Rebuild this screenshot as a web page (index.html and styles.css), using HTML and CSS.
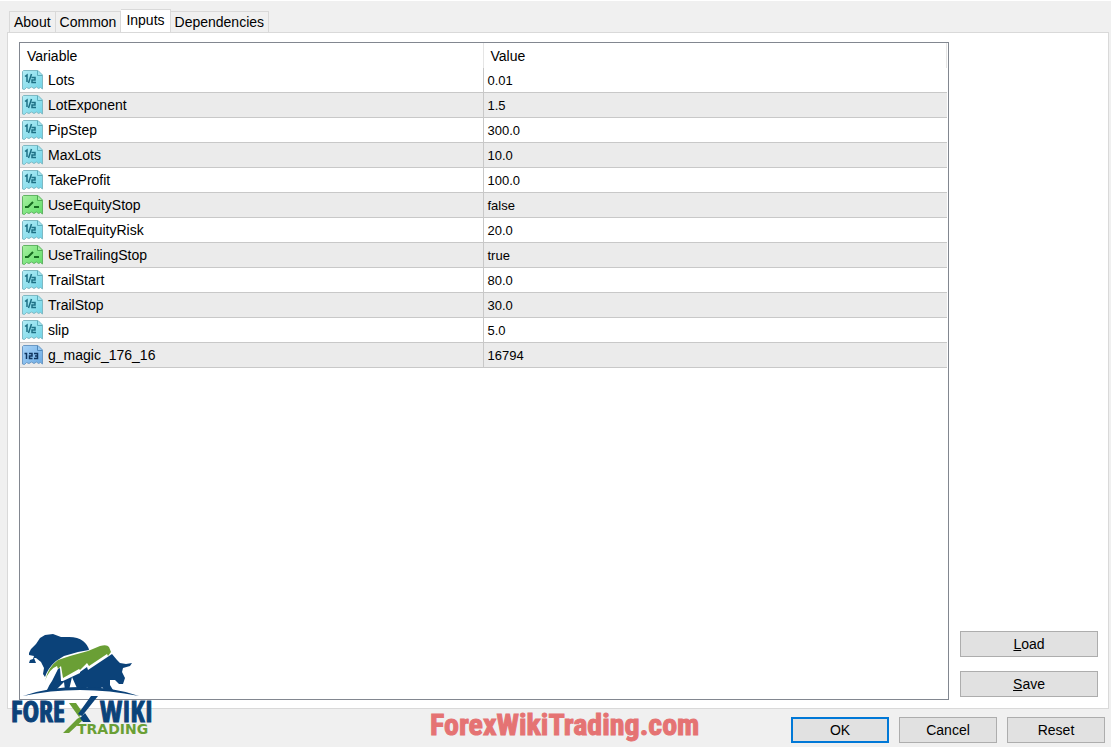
FILE: index.html
```html
<!DOCTYPE html>
<html lang="en">
<head>
<meta charset="utf-8">
<title>Inputs</title>
<link rel="stylesheet" href="styles.css">
</head>
<body>
<svg class="defs" aria-hidden="true">
  <defs>
    <linearGradient id="cyan" x1="0" y1="0" x2="1" y2="1"><stop offset="0" stop-color="#b4eef6"/><stop offset="1" stop-color="#6fd3e6"/></linearGradient>
    <linearGradient id="green" x1="0" y1="0" x2="1" y2="1"><stop offset="0" stop-color="#a8f0a0"/><stop offset="1" stop-color="#5fdc68"/></linearGradient>
    <linearGradient id="blue" x1="0" y1="0" x2="1" y2="1"><stop offset="0" stop-color="#a8d4f8"/><stop offset="1" stop-color="#6aa9e2"/></linearGradient>
    <path id="sheet" d="M1.500 .5H16L20.500 5V19L18.500 17.500L16.500 18.500L14.500 17L12 18.500L9.500 17L7 18.500L4.500 17.500L2.500 19.500L.5 19V1.500Z"/>
    <symbol id="double" viewBox="0 0 21 20">
      <use href="#sheet" fill="url(#cyan)" stroke="#7fb9c4" stroke-width="1"/>
      <path d="M15.500 1V5.500H20" fill="#a5e3ee" stroke="#5aaebd"/>
      <path d="M3 6.500L5 5V12M9.500 4L6.500 13M9.500 7.500H13V10H10V12.500H14" fill="none" stroke="#1d7085" stroke-width="1.500"/>
    </symbol>
    <symbol id="bool" viewBox="0 0 21 20">
      <use href="#sheet" fill="url(#green)" stroke="#62b465" stroke-width="1"/>
      <path d="M15.500 1V5.500H20" fill="#a8efa0" stroke="#4cab52"/>
      <path d="M3 12H6L11 7M12 12H17" fill="none" stroke="#176b20" stroke-width="2"/>
    </symbol>
    <symbol id="integer" viewBox="0 0 21 20">
      <use href="#sheet" fill="url(#blue)" stroke="#6c99c4" stroke-width="1"/>
      <path d="M15.500 1V5.500H20" fill="#9ccbf2" stroke="#4f88bb"/>
      <path d="M2.500 8.500H4.500V14M7 8.500H10V11H7.500V13.500H10.500M12 8.500H15.500V13.500H12M13 11H15" fill="none" stroke="#0f355f" stroke-width="1.500"/>
    </symbol>
  </defs>
</svg>
<main class="dialog">
  <nav class="tabs" role="tablist">
    <button class="tab" role="tab">About</button>
    <button class="tab" role="tab">Common</button>
    <button class="tab tab-active" role="tab" aria-selected="true">Inputs</button>
    <button class="tab" role="tab">Dependencies</button>
  </nav>
  <section class="panel">
    <div class="list">
      <table class="inputs">
        <thead><tr><th>Variable</th><th>Value</th></tr></thead>
        <tbody>
          <tr><td><svg class="icon"><use href="#double"/></svg>Lots</td><td>0.01</td></tr>
          <tr><td><svg class="icon"><use href="#double"/></svg>LotExponent</td><td>1.5</td></tr>
          <tr><td><svg class="icon"><use href="#double"/></svg>PipStep</td><td>300.0</td></tr>
          <tr><td><svg class="icon"><use href="#double"/></svg>MaxLots</td><td>10.0</td></tr>
          <tr><td><svg class="icon"><use href="#double"/></svg>TakeProfit</td><td>100.0</td></tr>
          <tr><td><svg class="icon"><use href="#bool"/></svg>UseEquityStop</td><td>false</td></tr>
          <tr><td><svg class="icon"><use href="#double"/></svg>TotalEquityRisk</td><td>20.0</td></tr>
          <tr><td><svg class="icon"><use href="#bool"/></svg>UseTrailingStop</td><td>true</td></tr>
          <tr><td><svg class="icon"><use href="#double"/></svg>TrailStart</td><td>80.0</td></tr>
          <tr><td><svg class="icon"><use href="#double"/></svg>TrailStop</td><td>30.0</td></tr>
          <tr><td><svg class="icon"><use href="#double"/></svg>slip</td><td>5.0</td></tr>
          <tr><td><svg class="icon"><use href="#integer"/></svg>g_magic_176_16</td><td>16794</td></tr>
        </tbody>
      </table>
    </div>
    <aside class="side">
      <button class="button"><u>L</u>oad</button>
      <button class="button"><u>S</u>ave</button>
    </aside>
  </section>
  <footer class="footer">
    <button class="button button-default">OK</button>
    <button class="button">Cancel</button>
    <button class="button">Reset</button>
  </footer>
  <svg class="logo" viewBox="0 0 150 112" role="img" aria-label="Forex Wiki Trading">
    <path class="navy" d="M19 26L21 22L26 17L30 11L35 8L43 7L51 10L59 10Q68 10 73 14Q78 18 79 23L68 25L54 29L46 34Q38 41 35 50L33 47L34 41L31 35L26 31L24 31L26 36L19 36L20 33L23 32L24 29L19 28Z"/>
    <path class="navy" d="M37 63Q39 58 42 54L48 42L50 41L51 54L53 54L70 46V45L77 40L78 43L102 27L107 33L110 36L116 37L122 36L120 39L113 41L112 45L115 51L113 57H109L105 53L100 53L100 58L103 63L95 64L92 60L90 63H80L77 60L75 63H68L66 59L62 50L59 63H55L54 55L46 63Z"/>
    <path class="green" d="M35 54Q38 40 48 33L60 29L78 24L90 19Q97 17 99 20L101 25L98 29L97 27L79 39L77 36L70 43L69 42L53 51L51 39L48 42L47 39Q39 42 35 54Z"/>
    <path class="navy" d="M13 69Q38 60 70 60Q104 60 129 69Q100 63 70 63Q40 63 13 69Z"/>
    <text class="logo-name navy" x="1" y="95">FORE</text>
    <text class="logo-name navy" x="90" y="95">WIKI</text>
    <path class="green" d="M59 76H66L73 86L69 90ZM67 92L70 90L74 92L59 106H53Z"/>
    <path class="navy" d="M81 69H88L72 89L68 87ZM70 91L75 86L81 95H73Z"/>
    <text class="logo-sub green" x="67" y="107">TRADING</text>
  </svg>
  <div class="watermark">ForexWikiTrading.com</div>
</main>
</body>
</html>
```
FILE: styles.css
```css
* { box-sizing: border-box; }
body { margin: 0; background: #f0f0f0; color: #000; font: 14px/16px "Liberation Sans", Arial, sans-serif; }
button { font: inherit; color: inherit; }
.defs { position: absolute; width: 0; height: 0; }
.dialog { position: relative; display: flex; flex-direction: column; min-height: 100vh; border-top: 1px solid #fff; padding: 8px 2px 4px 7px; }
.tabs { display: flex; align-items: flex-end; height: 24px; padding-left: 2px; margin-bottom: -1px; }
.tab { height: 22px; padding: 1px 4px; border: 1px solid #d9d9d9; border-left-width: 0; background: #f0f0f0; white-space: nowrap; }
.tab:first-child { border-left-width: 1px; }
.tab-active { height: 24px; background: #fff; border-bottom-color: #fff; padding: 0 5px 3px; }
.panel { display: flex; flex: 1; gap: 11px; padding: 9px 10px 8px 11px; border: 1px solid #d9d9d9; background: #fff; }
.list { flex: 1; border: 1px solid #828790; padding-right: 1px; }
.inputs { width: 100%; table-layout: fixed; border-collapse: separate; border-spacing: 0; }
th, td { height: 25px; padding: 0 4px; text-align: left; font-weight: 400; border-bottom: 1px solid #c8c8c8; line-height: 20px; }
th { border-bottom: 0; padding: 0 6px 0 7px; border-right: 1px solid #e5e5e5; }
td { padding-top: 2px; font-size: 13px; }
td:first-child { padding: 0 0 0 2px; border-right: 1px solid #c8c8c8; font-size: 14px; }
tbody tr:nth-child(even) { background: #ebebeb; }
.icon { width: 21px; height: 20px; margin-right: 5px; vertical-align: top; }
.side { display: flex; flex-direction: column; justify-content: flex-end; gap: 14px; width: 138px; padding-bottom: 3px; }
.button { height: 26px; padding: 0 0 1px; border: 1px solid #adadad; background: #e1e1e1; }
.button-default { border: 2px solid #0078d7; }
.footer { display: flex; justify-content: flex-end; gap: 10px; padding: 8px 4px 0; }
.footer .button { width: 98px; }
.logo { position: absolute; left: 10px; bottom: 8px; width: 150px; height: 112px; overflow: visible; }
.navy { fill: #0b4279; }
.green { fill: #6a9f35; }
.logo-name { font: 700 28px "Liberation Sans Narrow", "Open Sans Condensed", Lato, sans-serif; stroke: #0b4279; stroke-width: 1px; }
.logo-sub { font: 700 14px "DejaVu Sans", sans-serif; }
.watermark { position: absolute; left: 430px; bottom: 4px; color: #e57373; font: 700 30px/36px Impact, "Liberation Sans Narrow", "Roboto Condensed", "Open Sans Condensed", sans-serif; -webkit-text-stroke: 1px #e57373; }
```
